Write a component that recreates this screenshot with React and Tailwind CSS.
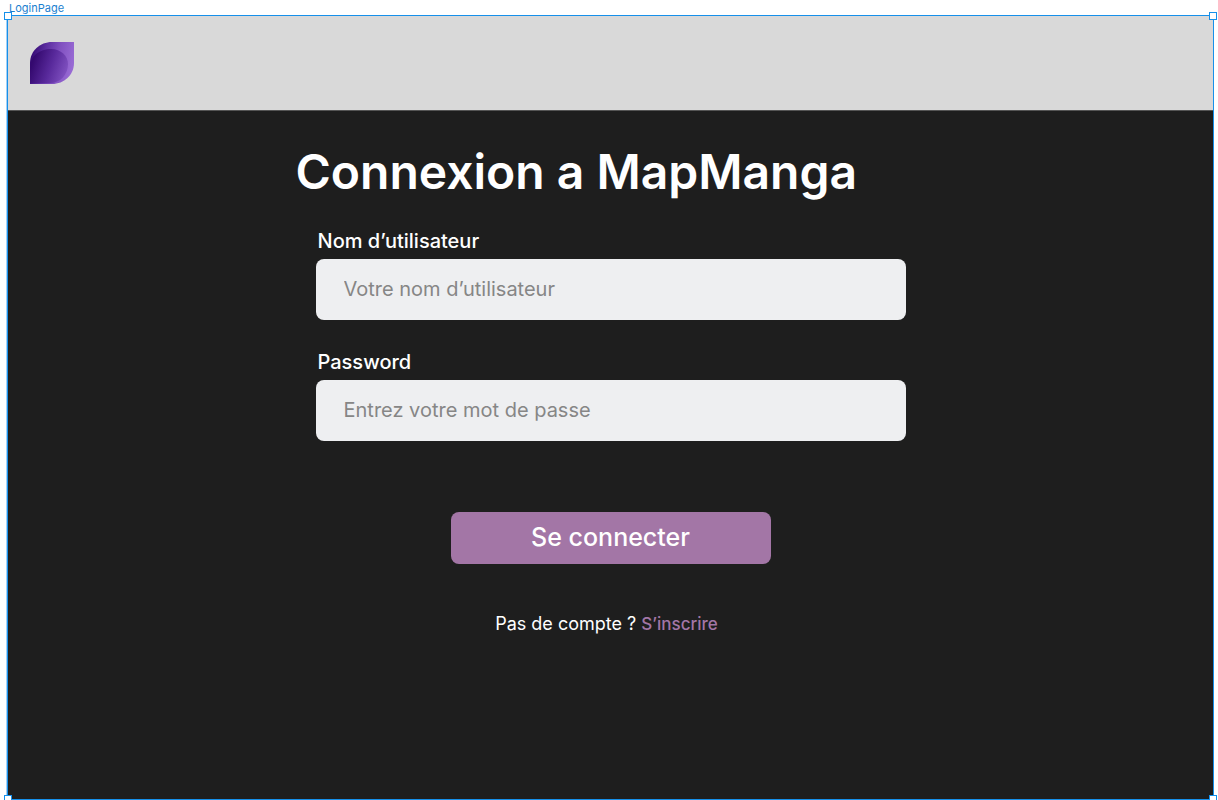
import React from "react";

function Handle({ className }) {
  return (
    <span
      aria-hidden="true"
      className={`absolute size-2 border border-[#1690ea] bg-white ${className}`}
    />
  );
}

function Logo() {
  return (
    <svg viewBox="0 0 44 42" className="h-[42px] w-11" role="img" aria-label="MapManga">
      <defs>
        <linearGradient id="leaf" gradientUnits="userSpaceOnUse" x1="0" y1="18" x2="42" y2="26">
          <stop offset="0" stopColor="#350a74" />
          <stop offset="0.3" stopColor="#5a2c9e" />
          <stop offset="0.65" stopColor="#8151c0" />
          <stop offset="1" stopColor="#986ad4" />
        </linearGradient>
        <linearGradient id="drop" gradientUnits="userSpaceOnUse" x1="2" y1="22" x2="37" y2="34">
          <stop offset="0" stopColor="#34096f" />
          <stop offset="0.5" stopColor="#592a9c" />
          <stop offset="1" stopColor="#8354c3" />
        </linearGradient>
      </defs>
      <path d="M0 42V21C0 9 10 0 22 0H44V21C44 33 34 42 22 42Z" fill="url(#leaf)" />
      <path d="M0 41V24C0 14 10 7 21 7C31 7 38 14 38 22C38 33 30 41 20 41Z" fill="url(#drop)" />
    </svg>
  );
}

function Field({ id, label, type, placeholder, autoComplete }) {
  return (
    <div className="flex flex-col gap-1">
      <label htmlFor={id} className="self-start pl-0.5 text-xl leading-7 font-medium text-white">
        {label}
      </label>
      <input
        id={id}
        type={type}
        placeholder={placeholder}
        autoComplete={autoComplete}
        className="h-[61px] w-full rounded-lg bg-[#eeeff1] px-7 pb-0.5 text-xl text-[#1e1e1e] placeholder:text-[#868686]"
      />
    </div>
  );
}

export default function App() {
  return (
    <div className="flex min-h-screen flex-col overflow-hidden bg-white pr-1 pl-[7px] font-['Inter',sans-serif]">
      <div className="h-[15px] pl-0.5 text-[11px] leading-4 text-[#1b7fd0]">LoginPage</div>
      <div className="relative flex flex-1 flex-col border border-[#1690ea] bg-[#1e1e1e] shadow-[-1px_0_0_#a5d0f5]">
        <header className="flex h-[95px] items-center border-b border-[#555555] bg-[#d9d9d9] px-[22px]">
          <Logo />
        </header>
        <main className="mx-auto w-full max-w-[630px] pt-8 pb-10">
          <h1 className="text-5xl leading-[58px] font-semibold whitespace-nowrap text-white">
            Connexion a MapManga
          </h1>
          <form className="flex flex-col px-5 pt-[26px]" onSubmit={(e) => e.preventDefault()}>
            <div className="flex flex-col gap-7">
              <Field
                id="username"
                label="Nom d’utilisateur"
                type="text"
                placeholder="Votre nom d’utilisateur"
                autoComplete="username"
              />
              <Field
                id="password"
                label="Password"
                type="password"
                placeholder="Entrez votre mot de passe"
                autoComplete="current-password"
              />
            </div>
            <button
              type="submit"
              className="mt-[71px] h-[52px] w-full max-w-80 self-center rounded-lg bg-[#a376a6] text-[25px] font-medium text-white"
            >
              Se connecter
            </button>
            <p className="mt-12 pr-2 text-center text-lg leading-6 text-white">
              Pas de compte ?{" "}
              <a href="#inscription" className="text-[17px] font-medium text-[#a376a6]">
                S’inscrire
              </a>
            </p>
          </form>
        </main>
        <Handle className="-top-1 -left-1" />
        <Handle className="-top-1 -right-1" />
        <Handle className="-bottom-1 -left-1" />
        <Handle className="-right-1 -bottom-1" />
      </div>
    </div>
  );
}
